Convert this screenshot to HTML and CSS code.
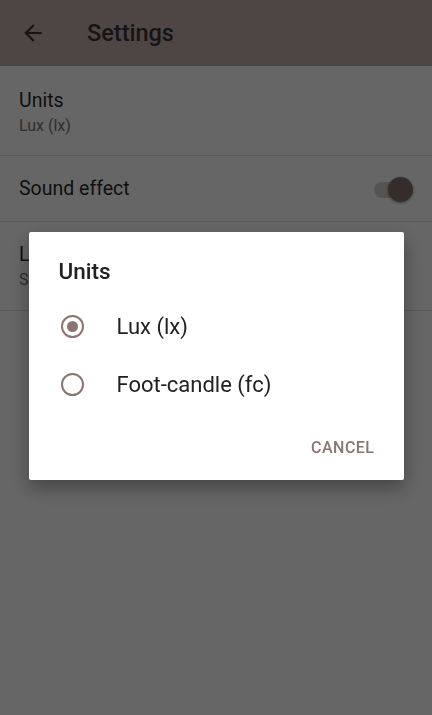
FILE: index.html
```html
<!DOCTYPE html>
<html lang="en">
<head>
    <meta charset="UTF-8">
    <meta name="viewport" content="width=device-width, initial-scale=1.0">
    <title>Settings</title>
    <link rel="stylesheet" href="styles.css">
</head>
<body>
<header class="app-bar">
    <svg class="back" width="24" height="24" viewBox="0 0 24 24">
        <path d="M20 11H7.83l5.59-5.59L12 4l-8 8 8 8 1.41-1.41L7.83 13H20v-2z" fill="currentColor"/>
    </svg>
    <h1 class="app-title">Settings</h1>
</header>

<div class="settings">
    <div class="pref">
        <div class="pref-title">Units</div>
        <div class="pref-summary">Lux (lx)</div>
    </div>
    <div class="pref pref-switch">
        <div class="pref-title">Sound effect</div>
        <div class="switch">
            <span class="track"></span>
            <span class="thumb"></span>
        </div>
    </div>
    <div class="pref">
        <div class="pref-title">Language</div>
        <div class="pref-summary">System default</div>
    </div>
</div>

<!-- dialog over the settings list -->
<div class="scrim">
    <div class="dialog">
        <h2 class="dialog-title">Units</h2>
        <label class="option">
            <span class="radio checked"></span>
            <span>Lux (lx)</span>
        </label>
        <label class="option">
            <span class="radio"></span>
            <span>Foot-candle (fc)</span>
        </label>
        <div class="actions">
            <button type="button" class="btn">CANCEL</button>
        </div>
    </div>
</div>
</body>
</html>
```

FILE: styles.css
```css
body {
    margin: 0;
    width: 432px;
    height: 715px;
    background-color: #fff;
    font-family: Roboto, "Noto Sans", sans-serif;
    color: rgba(0, 0, 0, 0.87);
    overflow: hidden;
}

.app-bar {
    height: 66px;
    background-color: #c4b0ab;
    display: flex;
    align-items: center;
    padding-left: 20px;
    color: #3a3433;
}

.back {
    width: 26px;
    height: 26px;
}

.app-title {
    margin: 0 0 0 41px;
    font-size: 23.5px;
    font-weight: 500;
    color: #3a3433;
}

.pref {
    border-bottom: 1px solid #e0e0e0;
    padding: 0 19px;
    display: flex;
    flex-direction: column;
    justify-content: center;
}

.pref:first-child {
    height: 89px;
}

.pref-switch {
    height: 65px;
    flex-direction: row;
    align-items: center;
    justify-content: space-between;
}

.pref:last-child {
    height: 88px;
}

.pref-title {
    font-size: 19.5px;
    line-height: 25px;
}

.pref-summary {
    font-size: 16px;
    line-height: 20px;
    color: #757575;
    margin-top: 3px;
}

.pref:first-child .pref-title {
    margin-top: 3px;
}

.switch {
    position: relative;
    width: 40px;
    height: 26px;
    margin-right: 0;
    margin-top: 2px;
}

.switch .track {
    position: absolute;
    left: 1px;
    top: 5px;
    width: 32px;
    height: 16px;
    border-radius: 8px;
    background-color: #d8d0ce;
}

.switch .thumb {
    position: absolute;
    right: 0;
    top: 0;
    width: 25px;
    height: 25px;
    border-radius: 50%;
    background-color: #86706c;
    box-shadow: 0 1px 3px rgba(0, 0, 0, 0.4);
}

.scrim {
    position: fixed;
    inset: 0;
    background-color: rgba(0, 0, 0, 0.6);
    display: flex;
    align-items: center;
    justify-content: center;
}

.dialog {
    width: 375px;
    height: 248px;
    margin-bottom: 3px;
    box-sizing: border-box;
    background-color: #fff;
    border-radius: 2px;
    box-shadow: 0 8px 20px rgba(0, 0, 0, 0.35);
    padding-top: 24px;
    display: flex;
    flex-direction: column;
}

.dialog-title {
    margin: 0 0 11px 30px;
    font-size: 22.5px;
    font-weight: 500;
    line-height: 30px;
    color: #212121;
}

.option {
    display: flex;
    align-items: center;
    height: 58px;
    padding-left: 32px;
    font-size: 22px;
    color: #212121;
}

.radio {
    width: 19px;
    height: 19px;
    border: 2px solid #8a7571;
    border-radius: 50%;
    margin-right: 33px;
    position: relative;
}

.radio.checked::after {
    content: "";
    position: absolute;
    left: 4px;
    top: 4px;
    width: 11px;
    height: 11px;
    border-radius: 50%;
    background-color: #8a7571;
}

.actions {
    display: flex;
    justify-content: flex-end;
    padding: 17px 21px 0 0;
}

.btn {
    background: none;
    border: none;
    font-family: Roboto, sans-serif;
    font-size: 16px;
    font-weight: 500;
    letter-spacing: 0.5px;
    color: #8a7571;
    padding: 8px 8px;
}
```
